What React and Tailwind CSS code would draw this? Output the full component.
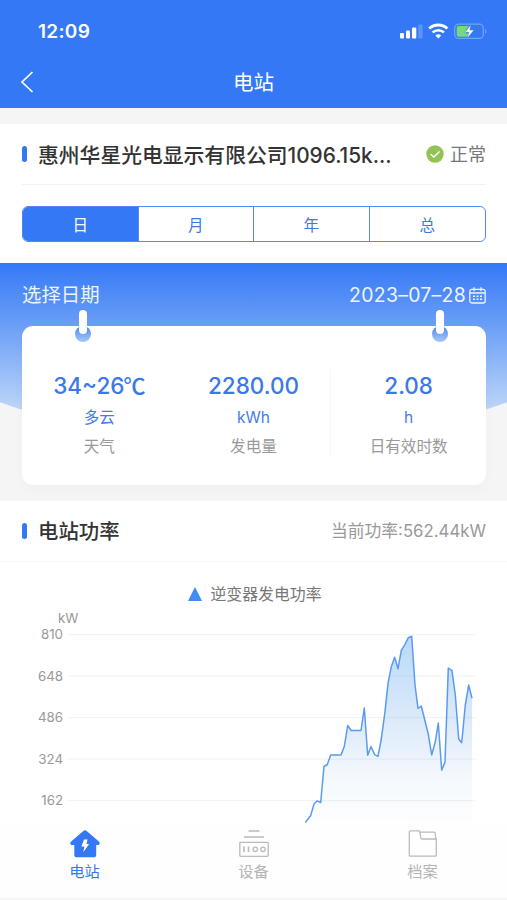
import { useState } from 'react';

const periods = ['日', '月', '年', '总'];

const stats = [
  { value: '34~26', suffix: '℃', unit: '多云', label: '天气' },
  { value: '2280.00', unit: 'kWh', label: '发电量' },
  { value: '2.08', unit: 'h', label: '日有效时数' },
];

const ticks = ['810', '648', '486', '324', '162'];

// [x, y] in chart pixels, the first grid line is at y = 10
const points = [
  [305.3, 197.5], [310.7, 190.5], [314, 179], [317.3, 175.8], [320.7, 177.5], [324, 141.5],
  [327.3, 139.5], [330.7, 130], [341, 130], [344.3, 121.5], [347.7, 100.5], [351, 105.5],
  [361, 105.5], [364.3, 83], [367.7, 130.3], [371, 121.5], [374.7, 129.7], [378, 131.3],
  [381.3, 114], [385, 86.7], [388, 58.3], [391.3, 41.7], [394.7, 32.3], [398, 43.7],
  [401.3, 25.3], [405, 19.3], [408.3, 12.7], [411.7, 11.3], [415, 60], [418, 83.3],
  [421.3, 81], [428.3, 109.3], [431.7, 130], [435.3, 116.7], [438.3, 98], [441.7, 145.3],
  [445, 137], [448.3, 43], [452, 45.7], [455.3, 70], [458.7, 114], [461.7, 117.7],
  [465.3, 80], [468.7, 60], [472, 73.3],
];

const line = points.map((p) => p.join(',')).join(' ');

const StatusIcons = () => (
  <svg className="w-[88px] h-[18px] mb-0.5" viewBox="0 0 88 18" fill="none">
    <rect x="0" y="11" width="4" height="5.5" rx="1" fill="#fff" />
    <rect x="6" y="8.5" width="4" height="8" rx="1" fill="#fff" />
    <rect x="12" y="5.5" width="4.3" height="11" rx="1" fill="#fff" />
    <rect x="18.3" y="2.5" width="4.2" height="14" rx="1" fill="#5c95f8" />
    <path d="M29.2 6.5a13.4 13.4 0 0 1 18.2 0" stroke="#fff" strokeWidth="2.9" />
    <path d="M32.6 10.4a8.5 8.5 0 0 1 11.4 0" stroke="#fff" strokeWidth="2.6" />
    <path d="M35.4 13.4a4.8 4.8 0 0 1 5.8 0l-2.9 3.2z" fill="#fff" />
    <rect x="54.7" y="2.2" width="28.6" height="14.2" rx="4" stroke="#71a4fa" strokeWidth="1.2" />
    <path d="M85 7v4.8c1.8-.7 1.8-4.1 0-4.8z" fill="#71a4fa" />
    <path d="M58.5 4H69l-3 3.6v3.9h5l-3 3.2h-9.5a1.8 1.8 0 0 1-1.8-1.8V5.8A1.8 1.8 0 0 1 58.5 4z" fill="#77db75" />
    <path d="M71 2.6 64.9 10.2h3.8l-1.2 5.9L74 8h-4.2z" fill="#fff" stroke="#3478f6" strokeWidth=".5" />
  </svg>
);

const Hook = () => (
  <div className="relative w-4 h-8">
    <div className="absolute left-0 bottom-0 w-4 h-4 rounded-full bg-linear-to-b from-[#4c86ea] to-[#a5c9f9]" />
    <div className="absolute left-1 top-0 w-2 h-6 rounded-full bg-white" />
  </div>
);

const HomeIcon = () => (
  <svg className="w-[30px] h-[28px]" viewBox="0 0 30 28">
    <path d="M13.3.9a2.6 2.6 0 0 1 3.4 0l12.2 10.6c1.5 1.4.7 3.6-1.3 3.6h-1.4v9.6a2.6 2.6 0 0 1-2.6 2.6H6.9a2.6 2.6 0 0 1-2.6-2.6v-9.6H2.4c-2 0-2.8-2.2-1.3-3.6z" fill="#3478f6" />
    <path d="M14 9.5h3.6l-1.1 4.6h2.6l-5.8 8.2 1-5.8h-2.9z" fill="#fff" />
  </svg>
);

const DeviceIcon = () => (
  <svg className="w-[30px] h-[28px]" viewBox="0 0 30 28" fill="none" stroke="#bbb" strokeWidth="1.3">
    <path d="M9.5 1h11M5 7h20" />
    <rect x=".8" y="12.3" width="28.4" height="14" rx=".8" />
    <path d="M5 16.5v5.5M9.5 16.5v5.5" strokeWidth="1.6" />
    <circle cx="16.3" cy="19.3" r="2.2" />
    <circle cx="24" cy="19.3" r="2.2" />
  </svg>
);

const FolderIcon = () => (
  <svg className="w-[30px] h-[28px]" viewBox="0 0 30 28" fill="none" stroke="#bbb" strokeWidth="1.3" strokeLinejoin="round">
    <path d="M28.3 9v16.2a1 1 0 0 1-1 1H2.3a1 1 0 0 1-1-1V1.8a1 1 0 0 1 1-1h9.2l1.3 6.9A1.4 1.4 0 0 0 14.2 9z" />
    <path d="M12 2.2h13.8a1.5 1.5 0 0 1 1.5 1.3l.5 5.5" />
  </svg>
);

const tabs = [
  { label: '电站', icon: <HomeIcon /> },
  { label: '设备', icon: <DeviceIcon /> },
  { label: '档案', icon: <FolderIcon /> },
];

const App = () => {
  const [period, setPeriod] = useState('日');

  return (
    <div className="w-[507px] h-[900px] overflow-hidden bg-[#f5f5f5] flex flex-col font-['Inter','Noto_Sans_CJK_SC',sans-serif]">
      {/* Header */}
      <header className="h-[108px] shrink-0 bg-[#3478f6] text-white">
        <div className="h-[56px] pt-2 pl-[38px] pr-[19px] flex items-center justify-between">
          <span className="text-[19px] font-semibold tracking-[0.3px]">12:09</span>
          <StatusIcons />
        </div>
        <div className="h-[52px] px-5 grid grid-cols-3 items-center">
          <svg className="w-[14px] h-[22px]" viewBox="0 0 14 22" fill="none" stroke="#fff" strokeWidth="1.7">
            <path d="M12.5 1 2 11l10.5 10" />
          </svg>
          <h1 className="pt-0.5 text-[20.5px] leading-6 text-center">电站</h1>
        </div>
      </header>

      {/* Station name and period */}
      <section className="mt-4 h-[139px] shrink-0 bg-white pl-[22px] pr-[21px]">
        <div className="h-[61px] flex items-center border-b border-[#f3f3f3]">
          <i className="w-[5px] h-4 rounded-sm bg-[#3478f6]" />
          <h2 className="ml-[11px] pt-[3px] text-[20.8px] font-medium text-[#333] whitespace-nowrap">
            惠州华星光电显示有限公司1096.15k...
          </h2>
          <svg className="ml-auto w-[18px] h-[18px]" viewBox="0 0 18 18">
            <circle cx="9" cy="9" r="8.7" fill="#92c353" />
            <path d="m4.5 9 3.3 3 5.8-5.5" fill="none" stroke="#fff" strokeWidth="1.4" />
          </svg>
          <span className="ml-1.5 pt-px text-[18px] text-[#777]">正常</span>
        </div>
        <div className="mt-[21px] h-9 grid grid-cols-4 rounded-md border border-[#5788ef] divide-x divide-[#5788ef] overflow-hidden">
          {periods.map((p) => (
            <button
              key={p}
              onClick={() => setPeriod(p)}
              className={p === period ? 'pt-[3px] bg-[#3478f6] text-white text-[15.5px]' : 'pt-[3px] text-[#3c78ea] text-[15.5px]'}
            >
              {p}
            </button>
          ))}
        </div>
      </section>

      {/* Daily summary */}
      <section className="relative isolate h-[238px] shrink-0 overflow-hidden">
        <div className="absolute -z-10 inset-x-0 top-0 h-[180px] bg-linear-to-b from-[#3478f6] from-0% via-[#6b9ff6] via-35% to-[#c0d7f7] to-83% [clip-path:ellipse(400px_180px_at_50%_0)]" />
        <div className="h-[63px] pt-0.5 pl-[22px] pr-[21px] flex items-center text-[19.4px] text-[#edf4ff]">
          <span>选择日期</span>
          <span className="ml-auto tracking-[0.3px]">2023–07–28</span>
          <svg className="ml-[3px] w-[17px] h-[17px]" viewBox="0 0 17 17" fill="none" stroke="#edf4ff" strokeWidth="1.3">
            <rect x=".8" y="2.3" width="15.4" height="13.7" rx="2" />
            <path d="M1 6h15M5 .2v4M12 .2v4" />
            <path d="M4 9.2h9.5M4 12.2h9.5" strokeWidth="1.6" strokeDasharray="2 1.5" />
          </svg>
        </div>
        <div className="relative ml-[22px] mr-[21px] h-[159px] rounded-[11px] bg-white shadow-[0_6px_12px_rgba(0,0,0,0.025)]">
          <div className="absolute left-[53px] -top-4"><Hook /></div>
          <div className="absolute right-[38px] -top-4"><Hook /></div>
          <div className="grid grid-cols-3 pt-[44px] text-center">
            {stats.map((s, i) => (
              <div key={s.label} className={i === 1 ? 'h-[87px] border-r border-[#f6f6f6]' : 'h-[87px]'}>
                <div className="h-8 leading-[31px] text-[22.5px] font-medium text-[#3c78e8]">
                  {s.value}
                  {s.suffix && <span className="font-['Noto_Sans_CJK_SC'] text-[22px] leading-none -ml-px">{s.suffix}</span>}
                </div>
                <div className="h-8 leading-8 text-[15.5px] text-[#447ee8]">{s.unit}</div>
                <div className="h-6 leading-[25px] text-[15.6px] text-[#999]">{s.label}</div>
              </div>
            ))}
          </div>
        </div>
      </section>

      {/* Power chart */}
      <section className="h-[322px] shrink-0 bg-white">
        <div className="h-[61px] pl-[22px] pr-[21px] flex items-center border-b border-[#f8f8f8]">
          <i className="w-[5px] h-4 rounded-sm bg-[#3478f6]" />
          <h2 className="ml-[11px] pt-0.5 text-[20.4px] font-medium text-[#333]">电站功率</h2>
          <span className="ml-auto pt-0.5 text-[16.8px] text-[#999]">当前功率:562.44kW</span>
        </div>
        <div className="h-[63px] pt-[21px] pl-[3px] flex justify-center items-start">
          <svg className="mt-1 w-[14px] h-[14px]" viewBox="0 0 14 14"><path d="M7 0 14 14H0z" fill="#408cf3" /></svg>
          <span className="ml-2 text-[15.9px] leading-6 text-[#777]">逆变器发电功率</span>
        </div>
        <svg className="block w-[507px] h-[198px] overflow-visible" viewBox="0 0 507 198">
          <defs>
            <linearGradient id="power" x1="0" y1="0" x2="0" y2="1">
              <stop offset="0" stopColor="#b9d9f7" />
              <stop offset=".45" stopColor="#dceafa" />
              <stop offset=".75" stopColor="#f4f8fd" />
              <stop offset="1" stopColor="#fdfefe" />
            </linearGradient>
          </defs>
          <text x="58" y="-2.5" fontSize="13.3" fill="#999">kW</text>
          <polygon points={`${line} 472,198`} fill="url(#power)" />
          {ticks.map((t, i) => (
            <g key={t}>
              <path d={`M68 ${9.7 + i * 41.5}H475`} stroke="#8899aa" strokeOpacity=".14" />
              <text x="63" y={14 + i * 41.5} textAnchor="end" fontSize="13.3" fill="#999">{t}</text>
            </g>
          ))}
          <polyline points={line} fill="none" stroke="#5a9bef" strokeWidth="1.5" strokeLinejoin="round" />
        </svg>
      </section>

      {/* Tab bar */}
      <nav className="h-[75px] shrink-0 bg-[#fefefe] grid grid-cols-3">
        {tabs.map((tab, i) => (
          <div key={tab.label} className="flex flex-col items-center pt-[7px]">
            {tab.icon}
            <span className={i === 0 ? 'mt-0.5 text-[15.3px] leading-6 text-[#3478f6]' : 'mt-0.5 text-[15.3px] leading-6 text-[#b5b5b5]'}>
              {tab.label}
            </span>
          </div>
        ))}
      </nav>
    </div>
  );
};

export default App;
